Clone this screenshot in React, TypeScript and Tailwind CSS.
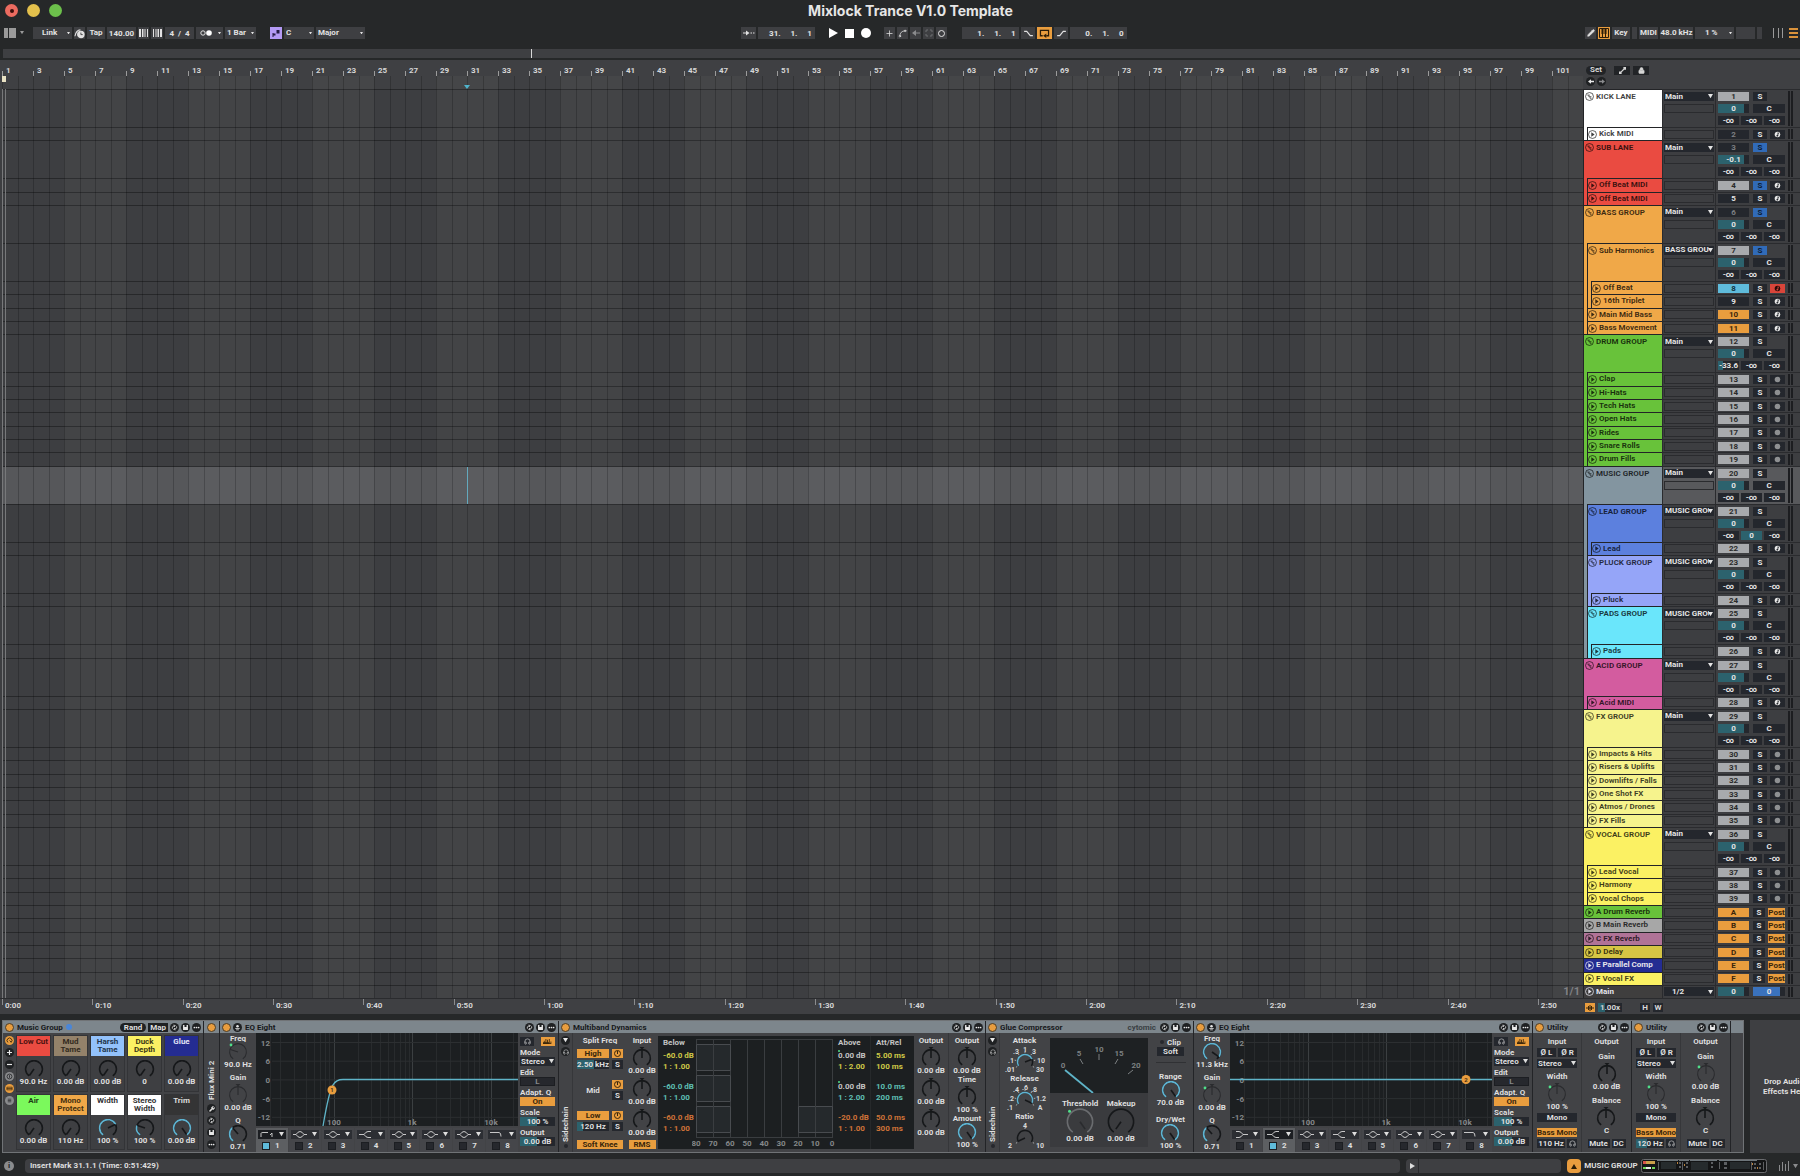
import React from 'react';
import clsx from 'clsx';
import { Headphones, Lock, Maximize, Pencil, Plus, Spline, Wrench } from 'lucide-react';

type Kind = 'group' | 'midi' | 'audio' | 'return' | 'main';

interface Track {
  name: string;
  kind: Kind;
  color: string;
  strips?: string[];
  id: string;
  state?: 'on' | 'off' | 'muted' | 'cue' | 'orange';
  route?: string;
  volume?: string;
  sends?: string[];
  solo?: boolean;
  armed?: boolean;
  selected?: boolean;
  light?: boolean;
}

const WHITE = 'bg-white';
const RED = 'bg-[#ea4b41]';
const ORANGE = 'bg-[#f0a848]';
const GREEN = 'bg-[#68c23a]';
const SLATE = 'bg-[#8395a0]';
const BLUE = 'bg-[#5c80de]';
const PERIWINKLE = 'bg-[#95a5f8]';
const CYAN = 'bg-[#6ae6fb]';
const PINK = 'bg-[#d35c9f]';
const CREAM = 'bg-[#f6f38d]';
const YELLOW = 'bg-[#fbf163]';

const tracks: Track[] = [
  { name: 'KICK LANE', kind: 'group', color: WHITE, id: '1', route: 'Main' },
  { name: 'Kick MIDI', kind: 'midi', color: WHITE, strips: [WHITE], id: '2', state: 'muted' },
  { name: 'SUB LANE', kind: 'group', color: RED, id: '3', state: 'muted', route: 'Main', volume: '-0.1', solo: true },
  { name: 'Off Beat MIDI', kind: 'midi', color: RED, strips: [RED], id: '4', solo: true },
  { name: 'Off Beat MIDI', kind: 'midi', color: RED, strips: [RED], id: '5', state: 'off' },
  { name: 'BASS GROUP', kind: 'group', color: ORANGE, id: '6', state: 'muted', route: 'Main', solo: true },
  { name: 'Sub Harmonics', kind: 'group', color: ORANGE, strips: [ORANGE], id: '7', route: 'BASS GROUP', solo: true },
  { name: 'Off Beat', kind: 'midi', color: ORANGE, strips: [ORANGE, ORANGE], id: '8', state: 'cue', armed: true },
  { name: '16th Triplet', kind: 'midi', color: ORANGE, strips: [ORANGE, ORANGE], id: '9', state: 'off' },
  { name: 'Main Mid Bass', kind: 'midi', color: ORANGE, strips: [ORANGE], id: '10', state: 'orange' },
  { name: 'Bass Movement', kind: 'midi', color: ORANGE, strips: [ORANGE], id: '11', state: 'orange' },
  { name: 'DRUM GROUP', kind: 'group', color: GREEN, id: '12', route: 'Main', sends: ['-33.6', '-∞', '-∞'] },
  { name: 'Clap', kind: 'audio', color: GREEN, strips: [GREEN], id: '13' },
  { name: 'Hi-Hats', kind: 'audio', color: GREEN, strips: [GREEN], id: '14' },
  { name: 'Tech Hats', kind: 'audio', color: GREEN, strips: [GREEN], id: '15' },
  { name: 'Open Hats', kind: 'audio', color: GREEN, strips: [GREEN], id: '16' },
  { name: 'Rides', kind: 'audio', color: GREEN, strips: [GREEN], id: '17' },
  { name: 'Snare Rolls', kind: 'audio', color: GREEN, strips: [GREEN], id: '18' },
  { name: 'Drum Fills', kind: 'audio', color: GREEN, strips: [GREEN], id: '19' },
  { name: 'MUSIC GROUP', kind: 'group', color: SLATE, id: '20', route: 'Main', selected: true },
  { name: 'LEAD GROUP', kind: 'group', color: BLUE, strips: [SLATE], id: '21', route: 'MUSIC GROUP', sends: ['-∞', '0', '-∞'] },
  { name: 'Lead', kind: 'midi', color: BLUE, strips: [SLATE, BLUE], id: '22' },
  { name: 'PLUCK GROUP', kind: 'group', color: PERIWINKLE, strips: [SLATE], id: '23', route: 'MUSIC GROUP' },
  { name: 'Pluck', kind: 'midi', color: PERIWINKLE, strips: [SLATE, PERIWINKLE], id: '24' },
  { name: 'PADS GROUP', kind: 'group', color: CYAN, strips: [SLATE], id: '25', route: 'MUSIC GROUP' },
  { name: 'Pads', kind: 'midi', color: CYAN, strips: [SLATE, CYAN], id: '26' },
  { name: 'ACID GROUP', kind: 'group', color: PINK, id: '27', route: 'Main' },
  { name: 'Acid MIDI', kind: 'midi', color: PINK, strips: [PINK], id: '28' },
  { name: 'FX GROUP', kind: 'group', color: CREAM, id: '29', route: 'Main' },
  { name: 'Impacts & Hits', kind: 'audio', color: CREAM, strips: [CREAM], id: '30' },
  { name: 'Risers & Uplifts', kind: 'audio', color: CREAM, strips: [CREAM], id: '31' },
  { name: 'Downlifts / Falls', kind: 'audio', color: CREAM, strips: [CREAM], id: '32' },
  { name: 'One Shot FX', kind: 'audio', color: CREAM, strips: [CREAM], id: '33' },
  { name: 'Atmos / Drones', kind: 'audio', color: CREAM, strips: [CREAM], id: '34' },
  { name: 'FX Fills', kind: 'audio', color: CREAM, strips: [CREAM], id: '35' },
  { name: 'VOCAL GROUP', kind: 'group', color: YELLOW, id: '36', route: 'Main' },
  { name: 'Lead Vocal', kind: 'audio', color: YELLOW, strips: [YELLOW], id: '37' },
  { name: 'Harmony', kind: 'audio', color: YELLOW, strips: [YELLOW], id: '38' },
  { name: 'Vocal Chops', kind: 'audio', color: YELLOW, strips: [YELLOW], id: '39' },
  { name: 'A Drum Reverb', kind: 'return', color: GREEN, id: 'A', state: 'orange' },
  { name: 'B Main Reverb', kind: 'return', color: 'bg-[#a7a7a7]', id: 'B', state: 'orange' },
  { name: 'C FX Reverb', kind: 'return', color: 'bg-[#b07397]', id: 'C', state: 'orange' },
  { name: 'D Delay', kind: 'return', color: 'bg-[#d5c544]', id: 'D', state: 'orange' },
  { name: 'E Parallel Comp', kind: 'return', color: 'bg-[#242c92]', id: 'E', state: 'orange', light: true },
  { name: 'F Vocal FX', kind: 'return', color: YELLOW, id: 'F', state: 'orange' },
  { name: 'Main', kind: 'main', color: 'bg-[#3f3e3e]', id: 'main', route: '1/2', light: true },
];

const BARS = 102;
const INSERT_BAR = 30;

/* ---------- small shared controls ---------- */

const Caret = ({ className = 'w-[5px]' }: { className?: string }) => (
  <svg viewBox="0 0 6 5" className={clsx('shrink-0 pointer-events-none fill-current', className)}>
    <path d="M0 0h6L3 5z" />
  </svg>
);

interface SelectProps {
  label: string;
  value: string;
  className?: string;
  pad?: string;
  small?: boolean;
  icon?: React.ReactNode;
}

const Select = ({ label, value, className, pad = 'pl-0.5', small, icon }: SelectProps) => (
  <span className={clsx('grid items-center', className)}>
    <select
      aria-label={label}
      defaultValue={value}
      className={clsx('col-start-1 row-start-1 w-full h-full min-w-0 appearance-none bg-transparent pr-[5px] leading-none', pad, icon && 'text-transparent')}
    >
      <option>{value}</option>
    </select>
    {icon}
    <Caret className={clsx('col-start-1 row-start-1 justify-self-end', small ? 'mr-0.5 w-[3px]' : 'mr-px w-[5px]')} />
  </span>
);

interface FieldProps {
  label: string;
  value: string;
  className?: string;
}

const Field = ({ label, value, className }: FieldProps) => (
  <input aria-label={label} defaultValue={value} className={clsx('min-w-0 text-center leading-none', className)} />
);

const TEAL_MOST = 'bg-[linear-gradient(to_right,#2c626d_84%,#24272d_84%)]';

interface KnobProps {
  label: string;
  value: number;
  tick?: boolean;
  blue?: boolean;
  ghost?: boolean;
  dot?: boolean;
  large?: boolean;
}

const polar = (cx: number, cy: number, r: number, deg: number) => {
  const a = ((deg - 90) * Math.PI) / 180;
  return [cx + r * Math.cos(a), cy + r * Math.sin(a)];
};

const arc = (cx: number, cy: number, r: number, from: number, to: number) => {
  const [x1, y1] = polar(cx, cy, r, from);
  const [x2, y2] = polar(cx, cy, r, to);
  return `M${x1} ${y1}A${r} ${r} 0 ${to - from > 180 ? 1 : 0} 1 ${x2} ${y2}`;
};

const Knob = ({ label, value, tick, blue, ghost, dot, large }: KnobProps) => {
  const cy = tick ? 13 : 9;
  const angle = -145 + value * 290;
  const [px, py] = polar(10, cy, large ? 6 : 8, angle);
  const rim = ghost ? '#2a2b2e' : '#16181a';
  const width = ghost || large ? 1.1 : 1.6;
  return (
    <span className="grid justify-items-center shrink-0">
      <svg
        viewBox={tick ? '0 0 20 21' : '0 0 20 17'}
        fill="none"
        className={clsx('col-start-1 row-start-1', large ? 'w-[30px] h-[26px]' : tick ? 'w-5 h-[21px]' : 'w-5 h-[17px]')}
      >
        <path d={arc(10, cy, 8.4, -145, 145)} stroke={large && ghost ? '#6a6c6f' : rim} strokeWidth={width} />
        {blue && <path d={arc(10, cy, 8.4, -145, angle)} stroke="#5fb4d2" strokeWidth={width} />}
        <path d={`M10 ${cy}L${px} ${py}`} stroke={rim} strokeWidth={width} />
        {tick && <path d="M7.5 2h5L10 4.500z" fill={rim} />}
        {dot && <circle cx="3" cy={cy - 7} r={large ? 1 : 1.4} fill="#4fe08a" />}
      </svg>
      <input
        type="range"
        aria-label={label}
        min={0}
        max={1}
        step={0.01}
        defaultValue={value}
        className="col-start-1 row-start-1 w-5 h-full opacity-0"
      />
    </span>
  );
};

interface DialProps extends KnobProps {
  text: string;
  hideLabel?: boolean;
}

const Dial = ({ text, hideLabel, ...knob }: DialProps) => (
  <div className="flex flex-col items-center">
    {!hideLabel && <span className="h-[9px] whitespace-nowrap">{knob.label}</span>}
    <Knob {...knob} />
    <span className="h-[9px] whitespace-nowrap">{text}</span>
  </div>
);

const Round = ({ label, children }: { label: string; children: React.ReactNode }) => (
  <button aria-label={label} className="size-[9px] shrink-0 rounded-full bg-[#1f2123] text-[#e8e8e8] flex items-center justify-center">
    {children}
  </button>
);

const SwapIcon = () => (
  <svg viewBox="0 0 10 10" className="size-[7px]" fill="none" stroke="currentColor" strokeWidth="1.300">
    <path d="M2 6.500C1.500 4 3 2.500 5.500 2.500M8 3.500C8.500 6 7 7.500 4.500 7.500M4.500 1l1.500 1.500L4.500 4M5.500 6L4 7.500 5.500 9" />
  </svg>
);

const SaveIcon = () => (
  <svg viewBox="0 0 10 10" className="size-[7px]" fill="currentColor">
    <path fillRule="evenodd" d="M1.500 1.500h7v7h-7zM3.500 1.500v2.800h3V1.500z" />
  </svg>
);

const MoreIcon = () => (
  <svg viewBox="0 0 10 10" className="size-[7px]" fill="currentColor">
    <circle cx="2" cy="5" r="1.200" />
    <circle cx="5" cy="5" r="1.200" />
    <circle cx="8" cy="5" r="1.200" />
  </svg>
);

const PersonIcon = () => (
  <svg viewBox="0 0 10 10" className="size-[7px]" fill="currentColor">
    <circle cx="5" cy="3.200" r="1.800" />
    <path d="M1.800 6h6.400v1H1.800zM3 8h4v1H3z" />
  </svg>
);

/* ---------- top bars ---------- */

const Chip = ({ label, className, children }: { label?: string; className?: string; children?: React.ReactNode }) => (
  <button aria-label={label} className={clsx('h-3 flex items-center justify-center whitespace-nowrap', className)}>
    {children}
  </button>
);

const TitleBar = () => (
  <header className="h-[21px] grid grid-cols-[1fr_auto_1fr] items-center pl-[5px]">
    <div className="flex gap-[9px]">
      <button aria-label="Close" className="size-[13px] rounded-full bg-[#ec6b60] flex items-center justify-center">
        <span className="size-1 rounded-full bg-[#3c0d0a]" />
      </button>
      <button aria-label="Minimize" className="size-[13px] rounded-full bg-[#e3c04c]" />
      <button aria-label="Zoom" className="size-[13px] rounded-full bg-[#6cc04b]" />
    </div>
    <h1 className="pl-4 font-['Inter',sans-serif] text-[14px] leading-5 font-bold text-[#e6e6e6]">Mixlock Trance V1.0 Template</h1>
    <span />
  </header>
);

const Transport = () => (
  <nav className="h-6 grid grid-cols-[1fr_auto_1fr] items-center pl-1 pr-0.5 text-[#e2e2e2]">
    <div className="flex items-center gap-0.5">
      <button aria-label="View" className="flex items-center gap-1 w-[27px] text-[#9a9a9a]">
        <svg viewBox="0 0 12 10" className="w-3 h-[10px] fill-current">
          <path d="M0 0h4v10H0zM5 0h7v10H5z" />
        </svg>
        <Caret className="w-1" />
      </button>
      <Select small label="Link" value="Link" pad="pl-[9px]" className="w-[39px] h-3 bg-[#3e3f42]" />
      <Chip label="Metronome" className="w-[11px] bg-[#3e3f42]">
        <svg viewBox="0 0 12 12" className="size-[11px]" fill="none" stroke="currentColor" strokeWidth="1.200">
          <circle cx="7.500" cy="7" r="3.500" fill="currentColor" />
          <path d="M1 9c1-5 3-7 6-7" />
          <path d="M7.500 5v2.200h2" stroke="#3e3f42" strokeWidth="1" />
        </svg>
      </Chip>
      <Chip className="w-[18px] bg-[#3e3f42]">Tap</Chip>
      <Field label="Tempo" value="140.00" className="w-[29px] h-3 bg-[#3e3f42]" />
      <Chip label="Nudge down" className="w-[11px] bg-[#3e3f42]">
        <svg viewBox="0 0 9 8" className="w-[9px] h-2 fill-current">
          <path d="M0 0h2v8H0zM3 0h1.500v8H3zM5.500 0h1v8h-1zM8 0h1v8H8z" />
        </svg>
      </Chip>
      <Chip label="Nudge up" className="w-3 bg-[#3e3f42]">
        <svg viewBox="0 0 9 8" className="w-[9px] h-2 fill-current">
          <path d="M0 0h1v8H0zM2.500 0h1v8h-1zM4.500 0H6v8H4.500zM7 0h2v8H7z" />
        </svg>
      </Chip>
      <Field label="Time signature" value="4  /  4" className="w-[29px] h-3 bg-[#3e3f42]" />
      <Select
        small
        label="Metronome mode"
        value="○●"
        className="w-[27px] h-3 bg-[#3e3f42]"
        icon={
          <svg viewBox="0 0 12 6" className="col-start-1 row-start-1 ml-1 w-3 h-1.5 pointer-events-none">
            <circle cx="3" cy="3" r="2.200" fill="none" stroke="#e2e2e2" />
            <circle cx="9" cy="3" r="2.800" fill="#fff" />
          </svg>
        }
      />
      <Select small label="Quantization" value="1 Bar" className="w-[31px] h-3 bg-[#3e3f42]" />
      <Chip label="Scale mode" className="ml-3 w-3 bg-[#b49af5] text-[#251a45]">
        <svg viewBox="0 0 12 12" className="size-3">
          <path d="M2.500 6h1v4h-1zM3.500 6.500h2v2h-2zM6.500 3h3v3.500h-3z" fill="currentColor" />
        </svg>
      </Chip>
      <Select small label="Root note" value="C" className="w-[30px] h-3 bg-[#3e3f42]" />
      <Select small label="Scale name" value="Major" className="w-[49px] h-3 bg-[#3e3f42]" />
    </div>

    <div className="flex items-center gap-0.5 pl-[66px]">
      <Chip label="Follow" className="w-[15px] bg-[#3e3f42]">
        <svg viewBox="0 0 12 6" className="w-3 h-1.5 fill-current">
          <path d="M0 2.500h3V.5L6.500 3 3 5.500v-2H0zM7.500 2.500H9v1H7.500zM10 2.500h1.500v1H10z" />
        </svg>
      </Chip>
      <Field label="Position" value="31.     1.     1" className="pl-2 w-[57px] h-3 bg-[#3e3f42]" />
      <button aria-label="Play" className="ml-3 w-[9px]">
        <svg viewBox="0 0 9 10" className="w-[9px] h-[10px] fill-white">
          <path d="M0 0l9 5-9 5z" />
        </svg>
      </button>
      <button aria-label="Stop" className="ml-[5px] size-[9px] bg-white" />
      <button aria-label="Record" className="ml-[5px] size-[10px] rounded-full bg-white" />
      <Chip label="Overdub" className="ml-[11px] w-[11px] bg-[#3e3f42]">
        <Plus size={9} />
      </Chip>
      <Chip label="Automation arm" className="w-[11px] bg-[#3e3f42]">
        <Spline size={9} />
      </Chip>
      <Chip label="Re-enable automation" className="w-[11px] bg-[#3e3f42] text-[#8a8b8d]">
        <svg viewBox="0 0 8 6" className="w-2 h-1.5 fill-current">
          <path d="M4 0v6L0 3zM4 2.500h4v1H4z" />
        </svg>
      </Chip>
      <Chip label="Capture" className="w-[11px] bg-[#3e3f42] text-[#8a8b8d]">
        <Maximize size={8} />
      </Chip>
      <Chip label="Session record" className="w-[11px] bg-[#3e3f42]">
        <span className="size-[7px] rounded-full border border-current" />
      </Chip>
      <Field label="Loop start" value="1.     1.     1" className="ml-[13px] pl-3 w-[57px] h-3 bg-[#3e3f42]" />
      <Chip label="Punch in" className="w-[14px] bg-[#3e3f42]">
        <svg viewBox="0 0 12 8" className="w-[11px] h-[7px]" fill="none" stroke="currentColor" strokeWidth="1.300">
          <path d="M1 1.500h3l4 5h3" />
        </svg>
      </Chip>
      <Chip label="Loop" className="w-[15px] bg-[#e99d3e] text-[#2b1c08]">
        <svg viewBox="0 0 12 10" className="w-[11px] h-[9px]" fill="none" stroke="currentColor" strokeWidth="1.400">
          <path d="M4 7.500H1.500v-6h9v6H8" />
          <path d="M4.500 7.500L8 5v5z" fill="currentColor" stroke="none" />
        </svg>
      </Chip>
      <Chip label="Punch out" className="w-[14px] bg-[#3e3f42]">
        <svg viewBox="0 0 12 8" className="w-[11px] h-[7px]" fill="none" stroke="currentColor" strokeWidth="1.300">
          <path d="M1 6.500h3l4-5h3" />
        </svg>
      </Chip>
      <Field label="Loop length" value="0.     1.     0" className="pl-3 w-[57px] h-3 bg-[#3e3f42]" />
    </div>

    <div className="flex items-center justify-end gap-0.5">
      <Chip label="Draw mode" className="w-[11px] bg-[#3e3f42]">
        <Pencil size={8} className="fill-current" />
      </Chip>
      <Chip label="Computer keyboard" className="w-3 bg-[#e99d3e] text-[#2b1c08]">
        <svg viewBox="0 0 10 10" className="size-[10px]" fill="none" stroke="currentColor">
          <path d="M.5.5h9v9h-9zM3.500 5v4.500M6.500 5v4.500" />
          <path d="M3.500.5V6M6.500.5V6" strokeWidth="2" />
        </svg>
      </Chip>
      <Chip className="w-[18px] bg-[#3e3f42]">Key</Chip>
      <Chip label="Key activity" className="w-[5px] bg-[#3e3f42]" />
      <Chip className="w-[19px] bg-[#3e3f42]">MIDI</Chip>
      <Chip className="w-[33px] bg-[#3e3f42]">48.0 kHz</Chip>
      <Select small label="CPU load" value="1 %" pad="pl-[10px]" className="w-[39px] h-3 bg-[#3e3f42]" />
      <Chip label="Overload" className="w-[19px] bg-[#3e3f42]" />
      <Chip label="MIDI activity" className="w-[5px] bg-[#3e3f42]" />
      <button aria-label="Session view" className="ml-[9px] flex justify-between w-[10px] h-[10px]">
        <span className="w-px bg-[#9a9a9a]" />
        <span className="w-px bg-[#9a9a9a]" />
        <span className="w-px bg-[#9a9a9a]" />
      </button>
      <button aria-label="Arrangement view" className="ml-1 flex flex-col justify-between w-[9px] h-[10px]">
        <span className="h-0.5 w-full bg-[#d9923b]" />
        <span className="h-0.5 w-full bg-[#d9923b]" />
        <span className="h-0.5 w-full bg-[#d9923b]" />
      </button>
    </div>
  </nav>
);

/* ---------- arrangement ---------- */

const BarColumns = () => (
  <div className="flex h-full w-full">
    {Array.from({ length: BARS }, (_, i) => (
      <div key={i} className={clsx('flex-1 border-l border-black/20', Math.floor(i / 4) % 2 === 1 && 'bg-white/[0.03]')} />
    ))}
  </div>
);

const BeatRuler = () => (
  <div className="h-[29px] flex bg-[#3f4043] pl-0.5 text-[#d6d6d6]">
    <div className="flex-1 min-w-0 flex flex-col">
      <div className="h-4 flex items-end">
        {Array.from({ length: BARS / 2 }, (_, i) => (
          <div key={i} className="flex-1 w-0 flex items-end whitespace-nowrap">
            <span className="w-px h-[5px] bg-[#9b9b9b]" />
            <span className="pl-[3px] h-[10px] leading-[10px]">{i * 2 + 1}</span>
          </div>
        ))}
      </div>
      <div className="relative flex-1">
        <BarColumns />
        <span className="absolute left-0 top-0 w-1 h-1.5 bg-[#e9e2c4]" />
        <svg viewBox="0 0 6 4" className="absolute bottom-0 w-1.5 h-1 -translate-x-1/2 fill-[#4fb4cc]" style={{ left: `${(INSERT_BAR / BARS) * 100}%` }}>
          <path d="M0 0h6L3 4z" />
        </svg>
      </div>
    </div>
    <div className="w-[217px] shrink-0 pl-[3px] pt-[5px] flex flex-col gap-0.5">
      <div className="flex items-center h-[10px]">
        <button className="w-5 h-[9px] rounded-full bg-[#222427] leading-none">Set</button>
        <button aria-label="Automation mode" className="ml-2 w-4 h-[9px] bg-[#222427] flex items-center justify-center">
          <svg viewBox="0 0 8 8" className="size-[7px]" fill="currentColor">
            <path d="M5 0h3v3H5zM0 5h3v3H0zM2 5l3-3 1 1-3 3z" />
          </svg>
        </button>
        <button aria-label="Lock envelopes" className="ml-[3px] w-4 h-[9px] bg-[#222427] flex items-center justify-center">
          <Lock size={7} className="fill-current" />
        </button>
      </div>
      <div className="flex gap-0.5">
        <Round label="Previous locator">
          <svg viewBox="0 0 8 6" className="w-1.5 h-[5px] fill-current"><path d="M4 0v6L0 3zM4 2h4v2H4z" /></svg>
        </Round>
        <Round label="Next locator">
          <svg viewBox="0 0 8 6" className="w-1.5 h-[5px] fill-[#8a8b8d]"><path d="M4 0v6l4-3zM4 2H0v2h4z" /></svg>
        </Round>
      </div>
    </div>
  </div>
);

const FoldIcon = ({ open }: { open: boolean }) => (
  <svg viewBox="0 0 10 10" className="size-[9px]" fill="none" stroke="currentColor">
    <circle cx="5" cy="5" r="4.400" strokeWidth="0.900" />
    {open ? (
      <path d="M2.400 3.400h3M4.200 5.200h3M5.600 7h1.800M4.200 3.400v1.800M5.600 5.200V7" strokeWidth="0.800" />
    ) : (
      <path d="M3.700 2.600l3.700 2.400-3.700 2.400z" fill="currentColor" stroke="none" />
    )}
  </svg>
);

const NameCell = ({ track }: { track: Track }) => (
  <div className="w-[79px] shrink-0 flex border-l border-[#232427]">
    {track.strips?.map((strip, i) => (
      <span key={i} className={clsx('w-[3px] box-content shrink-0 border-r border-[#232427]', strip)} />
    ))}
    <div
      className={clsx(
        'flex-1 min-w-0 flex gap-0.5 border-t border-[#232427] overflow-hidden whitespace-nowrap',
        track.kind === 'group' ? 'items-start pt-0.5' : 'items-center',
        !track.strips && 'pl-px',
        track.light ? 'text-[#e4e4ec]' : 'text-black/75',
        track.color,
      )}
    >
      <button aria-label={`Unfold ${track.name}`} className="shrink-0">
        <FoldIcon open={track.kind === 'group'} />
      </button>
      <span className="h-[10px] leading-[10px]">{track.name}</span>
    </div>
  </div>
);

const RouteCell = ({ track }: { track: Track }) => (
  <div
    className={clsx(
      'w-[53px] shrink-0 flex flex-col gap-[3px] px-px border-l border-t border-[#2a2b2e]',
      track.kind === 'group' ? 'pt-0.5' : 'justify-center',
      track.selected && 'bg-[#58595c]',
    )}
  >
    {track.route && (
      <Select
        label={`${track.name} output`}
        value={track.route}
        pad={track.kind === 'main' ? 'pl-2' : 'pl-px'}
        className="h-[9px] bg-[#24272d] text-[#e4e4e4] overflow-hidden"
      />
    )}
    {track.kind !== 'main' && <span className="h-[9px] border border-[#2a2b2e]" />}
  </div>
);

const stateClass = {
  on: 'bg-[#a8aaad] text-[#2a2a2a]',
  off: 'bg-[#24272d] text-[#e4e4e4]',
  muted: 'bg-[#24272d] text-[#7d7f83]',
  cue: 'bg-[#5fbbdb] text-[#10343f]',
  orange: 'bg-[#e99d3e] text-[#3a260a]',
};

const ArmButton = ({ track }: { track: Track }) => (
  <button
    aria-label={`Arm ${track.name}`}
    className={clsx('ml-[3px] w-[15px] h-[9px] flex items-center justify-center', track.armed ? 'bg-[#d9453a] text-[#2a0a08]' : 'bg-[#24272d] text-[#e8e8e8]')}
  >
    <svg viewBox="0 0 8 8" className="size-[7px]">
      <circle cx="4" cy="4" r="3.200" className={track.kind === 'audio' ? 'fill-[#8e9092]' : 'fill-current'} />
      {track.kind === 'midi' && <path d="M4.500 1.800v3.400M4.500 2l1.200 1" stroke={track.armed ? '#d9453a' : '#24272d'} strokeWidth="0.900" />}
      {track.kind === 'midi' && <circle cx="3.800" cy="5.300" r="1" fill={track.armed ? '#d9453a' : '#24272d'} />}
    </svg>
  </button>
);

const MixerCell = ({ track }: { track: Track }) => {
  const group = track.kind === 'group';
  const sends = track.sends ?? ['-∞', '-∞', '-∞'];
  return (
    <div className={clsx('w-[85px] shrink-0 flex gap-[3px] pl-0.5 border-l border-t border-[#2a2b2e] text-[#e4e4e4]', track.selected && 'bg-[#58595c]')}>
      <div className={clsx('w-[67px] flex flex-col gap-[3px]', group ? 'pt-0.5' : 'justify-center')}>
        {track.kind === 'main' ? (
          <div className="flex gap-1">
            <Field label="Main volume" value="0" className={clsx('w-[31px] h-[9px]', TEAL_MOST)} />
            <Field label="Cue volume" value="0" className="w-8 h-[9px] bg-[linear-gradient(to_right,#3a72bd_84%,#24272d_84%)]" />
          </div>
        ) : (
          <div className="flex">
            <button className={clsx('w-[31px] h-[9px] leading-[9px]', stateClass[track.state ?? 'on'])}>{track.id}</button>
            <button
              aria-label={`Solo ${track.name}`}
              className={clsx('ml-1 h-[9px] leading-[9px]', track.kind === 'return' ? 'w-3' : 'w-[14px]', track.solo ? 'bg-[#316bb8] text-[#0d1e36]' : 'bg-[#24272d]')}
            >
              S
            </button>
            {(track.kind === 'midi' || track.kind === 'audio') && <ArmButton track={track} />}
            {track.kind === 'return' && <button className="ml-[3px] w-[17px] h-[9px] leading-[9px] bg-[#e99d3e] text-[#3a260a]">Post</button>}
          </div>
        )}
        {group && (
          <>
            <div className="flex gap-1">
              <Field label={`${track.name} volume`} value={track.volume ?? '0'} className={clsx('w-[31px] h-[9px]', TEAL_MOST)} />
              <Field label={`${track.name} pan`} value="C" className="w-8 h-[9px] bg-[#24272d]" />
            </div>
            <div className="flex gap-0.5">
              {sends.map((send, i) => (
                <Field
                  key={i}
                  label={`${track.name} send ${'ABC'[i]}`}
                  value={send}
                  className={clsx('w-[21px] h-[9px]', send === '0' ? 'bg-[#2c626d]' : send === '-∞' ? 'bg-[#24272d]' : 'bg-[linear-gradient(to_right,#2c626d_24%,#24272d_24%)]')}
                />
              ))}
            </div>
          </>
        )}
      </div>
      <div className="flex gap-px py-px">
        <span className="w-0.5 bg-[#1c1d20]" />
        <span className="w-0.5 bg-[#1c1d20]" />
      </div>
    </div>
  );
};

const TrackRow = ({ track }: { track: Track }) => (
  <div className={clsx('flex', track.kind === 'group' ? 'shrink-0 basis-[38px]' : 'grow shrink-0 basis-[13px]')}>
    <div className={clsx('relative flex-1 min-w-0 border-t border-[#27282a] flex items-center justify-end', track.selected && 'bg-[#56575a]')}>
      {track.selected && <span className="absolute z-20 inset-y-0 w-px bg-[#63a9bd]" style={{ left: `${(INSERT_BAR / BARS) * 100}%` }} />}
      {track.kind === 'main' && <span className="pr-[3px] text-[11px] leading-3 text-[#7c7d80]">1/1</span>}
    </div>
    <NameCell track={track} />
    <RouteCell track={track} />
    <MixerCell track={track} />
  </div>
);

const Arrangement = () => (
  <main className="grow grid grid-cols-1 pl-0.5 bg-[#3d3e41]">
    <div className="col-start-1 row-start-1 flex flex-col">
      {tracks.map((track) => (
        <TrackRow key={track.id} track={track} />
      ))}
    </div>
    <div className="relative z-10 col-start-1 row-start-1 mr-[217px] grid pointer-events-none">
      <div className="col-start-1 row-start-1">
        <BarColumns />
      </div>
      <span className="col-start-1 row-start-1 w-1 border-x border-[#77787a]" />
    </div>
  </main>
);

const times = Array.from({ length: 18 }, (_, i) => `${Math.floor(i / 6)}:${String((i % 6) * 10).padStart(2, '0')}`);

const TimeRuler = () => (
  <div className="h-4 flex bg-[#3f4043] border-t border-[#2a2b2e] pl-0.5 text-[#d6d6d6]">
    <div className="flex-1 min-w-0 flex">
      {times.map((time, i) => (
        <div key={time} className={clsx('w-0 flex whitespace-nowrap', i === 17 ? 'flex-1' : 'flex-2')}>
          <span className="w-px h-1.5 bg-[#8b8c8e]" />
          <span className="pl-0.5 pt-0.5">{time}</span>
        </div>
      ))}
    </div>
    <div className="w-[217px] shrink-0 flex items-start pt-1 pl-0.5">
      <button aria-label="Optimize height" className="w-[10px] h-[9px] bg-[#e99d3e] flex items-center justify-center">
        <svg viewBox="0 0 8 6" className="w-2 h-1.5 fill-[#3a260a]"><path d="M0 2.500h8v1H0zM2 1h1v4H2zM3.500 0h1v6h-1zM5 1h1v4H5z" /></svg>
      </button>
      <Field label="Zoom" value="1.00x" className="ml-[3px] w-6 h-[9px] bg-[linear-gradient(to_right,#2c626d_30%,#24272d_30%)]" />
      <button className="ml-[18px] w-[10px] h-[9px] leading-[9px] bg-[#24272d]">H</button>
      <button className="ml-[3px] w-[10px] h-[9px] leading-[9px] bg-[#24272d]">W</button>
    </div>
  </div>
);

/* ---------- devices ---------- */

interface DeviceProps {
  title: string;
  width: string;
  person?: boolean;
  brand?: string;
  badge?: React.ReactNode;
  extra?: React.ReactNode;
  children: React.ReactNode;
}

const Power = ({ label }: { label: string }) => <button aria-label={`${label} on`} className="size-[9px] shrink-0 rounded-full bg-[#e99d3e] border border-[#4a3c28]" />;

const Device = ({ title, width, person, brand, badge, extra, children }: DeviceProps) => (
  <section className={clsx('shrink-0 flex flex-col border-r border-[#232427]', width)}>
    <div className="h-3 flex items-center gap-0.5 px-0.5 bg-[#7d868c]">
      <Power label={title} />
      {person && <Round label="MIDI input"><PersonIcon /></Round>}
      <h2 className="pl-px text-[#17191b] whitespace-nowrap">{title}</h2>
      {badge}
      <span className="flex-1" />
      {brand && <span className="text-[#3a3f43] pr-0.5">{brand}</span>}
      {extra}
      <Round label="Hot-swap preset"><SwapIcon /></Round>
      <Round label="Save preset"><SaveIcon /></Round>
      <Round label="More options"><MoreIcon /></Round>
    </div>
    <div className="flex-1 flex bg-[#424346]">{children}</div>
  </section>
);

const macros = [
  { name: 'Low Cut', value: '90.0 Hz', color: 'bg-[#ea4b41] text-[#4a1210]', pos: 0 },
  { name: 'Mud Tame', value: '0.00 dB', color: 'bg-[#94826a] text-[#332b20]', pos: 0 },
  { name: 'Harsh Tame', value: '0.00 dB', color: 'bg-[#93c2fb] text-[#22354c]', pos: 0 },
  { name: 'Duck Depth', value: '0', color: 'bg-[#fbf163] text-[#3d3a14]', pos: 0 },
  { name: 'Glue', value: '0.00 dB', color: 'bg-[#242c92] text-[#e0e2f5]', pos: 0 },
  { name: 'Air', value: '0.00 dB', color: 'bg-[#7bf95c] text-[#1f3f16]', pos: 0 },
  { name: 'Mono Protect', value: '110 Hz', color: 'bg-[#f0a848] text-[#46300f]', pos: 0 },
  { name: 'Width', value: '100 %', color: 'bg-white text-[#333]', pos: 0.72, blue: true },
  { name: 'Stereo Width', value: '100 %', color: 'bg-white text-[#333]', pos: 0.25, blue: true },
  { name: 'Trim', value: '0.00 dB', color: 'bg-[#343435] text-[#dcdcdc]', pos: 1, blue: true },
];

const RackIcon = ({ label, active, children }: { label: string; active?: boolean; children: React.ReactNode }) => (
  <button
    aria-label={label}
    className={clsx('size-[9px] rounded-full flex items-center justify-center leading-none', active ? 'bg-[#e99d3e] text-[#3a260a]' : 'bg-[#8a8b8d] text-[#2a2b2e]')}
  >
    {children}
  </button>
);

const MacroRack = () => (
  <Device
    title="Music Group"
    width="w-[201px]"
    badge={<span className="ml-px size-1.5 rounded-full bg-[#4a86d8]" />}
    extra={
      <>
        <button className="px-1 h-[9px] leading-[9px] rounded-full bg-[#1f2123]">Rand</button>
        <button className="px-0.5 h-[9px] leading-[9px] bg-[#1f2123]">Map</button>
      </>
    }
  >
    <div className="w-[13px] flex flex-col items-center gap-[3px] pt-[3px]">
      <RackIcon label="Macro controls" active>
        <svg viewBox="0 0 8 8" className="size-[7px]" fill="none" stroke="currentColor"><path d={arc(4, 4, 2.8, -140, 140)} /><path d="M4 4l2 2" /></svg>
      </RackIcon>
      <Round label="Add macro"><svg viewBox="0 0 6 6" className="size-[5px] fill-current"><path d="M0 2.300h6v1.400H0zM2.300 0h1.400v6H2.300z" /></svg></Round>
      <Round label="Remove macro"><svg viewBox="0 0 6 6" className="size-[5px] fill-current"><path d="M0 2.300h6v1.400H0z" /></svg></Round>
      <RackIcon label="Variations">
        <svg viewBox="0 0 8 8" className="size-[7px]" fill="none" stroke="currentColor"><circle cx="4" cy="4" r="2.800" /><path d="M4 2.500v3" /></svg>
      </RackIcon>
      <RackIcon label="Devices" active>
        <svg viewBox="0 0 8 8" className="size-[7px]" fill="none" stroke="currentColor"><path d="M1 2.500h6v3H1zM1 4h6" strokeWidth="0.800" /></svg>
      </RackIcon>
      <RackIcon label="Chains">
        <svg viewBox="0 0 8 8" className="size-[7px]" stroke="currentColor" strokeWidth="0.800"><path d="M2 2.500h4M2 4h4M2 5.500h4" /></svg>
      </RackIcon>
    </div>
    <div className="flex-1 grid grid-cols-5 grid-rows-2 gap-0.5 pt-0.5 pb-0.5 pr-1">
      {macros.map((macro) => (
        <div key={macro.name} className="flex flex-col border border-[#333437] bg-[#3e3f42]">
          <span className={clsx('h-5 pt-0.5 text-center leading-2', macro.color)}>{macro.name}</span>
          <div className="flex flex-col items-center pt-1">
            <Knob label={macro.name} value={macro.pos} blue={macro.blue} />
            <span className="h-[9px] whitespace-nowrap">{macro.value}</span>
          </div>
        </div>
      ))}
    </div>
  </Device>
);

const FoldedDevice = () => (
  <section className="w-4 shrink-0 flex flex-col items-center border-r border-[#232427] bg-[#424346]">
    <div className="h-3 w-full flex items-center justify-center bg-[#7d868c]"><Power label="Flux Mini 2" /></div>
    <h2 className="flex-1 [writing-mode:vertical-rl] rotate-180 pt-1 leading-[10px]">Flux Mini 2</h2>
    <div className="flex flex-col gap-[3px] pb-[3px]">
      <Round label="Show plug-in window"><Wrench size={6} className="fill-current" /></Round>
      <Round label="Hot-swap preset"><SwapIcon /></Round>
      <Round label="Save preset"><SaveIcon /></Round>
      <Round label="More options"><MoreIcon /></Round>
    </div>
  </section>
);

const filterShapes: Record<string, string> = {
  cut: 'M1 7V3.500q0-1 2-1h5M10 5l2-2v4',
  bell: 'M0 4.500h3M11 4.500H14M3 4.500Q7-1.500 11 4.500Q7 10.500 3 4.500',
  high: 'M0 4.500h5M12 1.500H9Q7 1.500 5 4.500Q7 7.500 9 7.500h3',
  low: 'M2 1.500h3Q7 1.500 9 4.500Q7 7.500 5 7.500H2M9 4.500h5',
  lp: 'M0 2.500h9q2 0 2 4',
};

interface EqProps {
  freq: string;
  freqPos: number;
  first: boolean;
  shapes: string[];
  active: number;
}

const freqLines = [14, 24, 38, 50, 58, 64, 69, 73, 78, 102, 115, 124, 132, 138, 144, 149, 153, 156, 180, 194, 204, 212, 218, 223, 228, 232, 235, 257];

const EqGraph = ({ first }: { first: boolean }) => (
  <svg viewBox="0 0 262 93" className="w-[262px] h-[93px] bg-[#1c1f21]" fill="none">
    {freqLines.map((x) => (
      <path key={x} d={`M${x}.5 0v93`} stroke={x === 78 || x === 156 || x === 235 ? '#3b3f41' : '#282b2d'} />
    ))}
    {[12, 6, 0, -6, -12].map((db, i) => (
      <g key={db}>
        <path d={`M16 ${9.5 + i * 18.7}H262`} stroke="#2c2f31" />
        <text x="14" y={12.5 + i * 18.7} textAnchor="end" className="fill-[#85888a]">{db}</text>
      </g>
    ))}
    <text x="78" y="92" textAnchor="middle" className="fill-[#85888a]">100</text>
    <text x="156" y="92" textAnchor="middle" className="fill-[#85888a]">1k</text>
    <text x="235" y="92" textAnchor="middle" className="fill-[#85888a]">10k</text>
    <path d={first ? 'M67 93C71 70 74 56 77 52Q80 46.500 87 46.500H262' : 'M0 46.500H262'} stroke="#5fb4c8" strokeWidth="1.300" />
    <circle cx={first ? 76 : 236} cy={first ? 57 : 46.5} r="4.500" fill="#e99d3e" />
    <text x={first ? 76 : 236} y={first ? 59 : 49} textAnchor="middle" className="fill-[#4a3010] text-[6px]">{first ? 1 : 2}</text>
  </svg>
);

const EqEight = ({ freq, freqPos, first, shapes, active }: EqProps) => (
  <Device title="EQ Eight" width="w-[339px]" person>
    <div className="w-9 shrink-0 flex flex-col items-center gap-1 pt-px">
      <Dial label="Freq" text={freq} value={freqPos} blue={!first} ghost={first} dot={first} />
      <Dial label="Gain" text="0.00 dB" value={0.5} tick ghost dot={!first} />
      <Dial label="Q" text="0.71" value={0.36} blue />
    </div>
    <div className="flex flex-col">
      <EqGraph first={first} />
      <div className="flex-1 grid grid-cols-8 gap-px pt-0.5">
        {shapes.map((shape, i) => (
          <div key={i} className={clsx('flex flex-col gap-0.5 px-0.5 pt-0.5', i === active ? 'bg-[#5d5f62]' : 'bg-[#45464a]')}>
            <button aria-label={`Filter ${i + 1} type`} className={clsx('h-[9px] flex items-center justify-between px-0.5', i === active ? 'bg-[#1c1e22]' : 'bg-[#2c2e33]')}>
              <svg viewBox="0 0 14 9" className="w-[14px] h-[9px]" fill="none" stroke="#d8d8d8" strokeWidth="0.900"><path d={filterShapes[shape]} /></svg>
              <Caret className="w-[5px]" />
            </button>
            <label className="flex items-center gap-[5px] pl-1 h-[9px]">
              <input type="checkbox" defaultChecked={i === active} className="size-2 appearance-none border border-[#1c1e22] bg-[#26282d] checked:bg-[#5fbbdb]" />
              {i + 1}
            </label>
          </div>
        ))}
      </div>
    </div>
    <div className="flex-1 flex flex-col gap-0.5 pl-0.5 pr-[3px] pt-1">
      <div className="flex justify-between">
        <button aria-label="Audition" className="w-[14px] h-[9px] bg-[#24272d] flex items-center justify-center"><Headphones size={7} /></button>
        <button aria-label="Analyze" className="w-[14px] h-[9px] bg-[#e99d3e] flex items-center justify-center">
          <svg viewBox="0 0 12 6" className="w-[10px] h-[5px] fill-[#3a260a]"><path d="M0 6V4h1V2h1v2h1V0h1v4h1V1h1v3h1V0h1v5h1V3h1v3z" /></svg>
        </button>
      </div>
      <div>Mode<Select label="Mode" value="Stereo" pad="pl-px" className="h-[9px] bg-[#24272d]" /></div>
      <div>Edit<button className="block w-full h-[9px] bg-[#26282d] border border-[#1c1e22] text-[#85888a] leading-[7px]">L</button></div>
      <div className="whitespace-nowrap">Adapt. Q<button className="block w-full h-[9px] bg-[#e99d3e] text-[#3a260a]">On</button></div>
      <div>Scale<Field label="Scale" value="100 %" className="block w-full h-[9px] bg-[linear-gradient(to_right,#2c626d_50%,#24272d_50%)]" /></div>
      <div>Output<Field label="Output" value="0.00 dB" className="block w-full h-[9px] bg-[linear-gradient(to_right,#2c626d_50%,#24272d_50%)]" /></div>
    </div>
  </Device>
);

const SideStrip = () => (
  <div className="w-[14px] shrink-0 flex flex-col items-center gap-0.5 pt-[3px] pb-1 border-r border-[#36373a]">
    <Round label="Collapse"><Caret className="w-[5px]" /></Round>
    <Round label="Sidechain listen"><Headphones size={6} /></Round>
    <span className="flex-1 [writing-mode:vertical-rl] rotate-180 leading-[10px]">Sidechain</span>
    <span className="size-1 rounded-full bg-[#26282d]" />
  </div>
);

const BandPower = ({ label }: { label: string }) => (
  <button aria-label={`${label} active`} className="w-[11px] h-[9px] bg-[#e99d3e] flex items-center justify-center">
    <span className="size-[7px] rounded-full border border-[#3a260a] flex justify-center"><span className="w-px h-[3px] bg-[#3a260a]" /></span>
  </button>
);

const bands = [
  { color: 'text-[#cfc947]', above: '0.00 dB', automated: true, ratio: '1 : 2.00', att: '5.00 ms', rel: '100 ms' },
  { color: 'text-[#5fbfb4]', above: '0.00 dB', automated: true, ratio: '1 : 2.00', att: '10.0 ms', rel: '200 ms' },
  { color: 'text-[#cf7338]', above: '-20.0 dB', ratio: '1 : 1.00', att: '50.0 ms', rel: '300 ms' },
];

const BandGraph = () => (
  <svg viewBox="0 0 144 112" className="w-[144px] h-28" fill="none">
    {Array.from({ length: 9 }, (_, i) => (
      <g key={i}>
        <path d={`M${4.5 + i * 17} 3v98`} stroke="#3a3d40" />
        <text x={4 + i * 17} y="110" textAnchor="middle" className="fill-[#85888a]">{80 - i * 10}</text>
      </g>
    ))}
    <path d="M4 3.500h137M4 101.500h137" stroke="#3a3d40" />
    {[8.5, 39.5, 70.5].map((y) => (
      <path key={y} d={`M4.500 ${y}h34v26h-34z`} fill="#25292c" stroke="#484b4f" />
    ))}
    <path d="M21.500 8v93" stroke="#3a3d40" />
    <path d="M106.500 70.500h34v26h-34z" fill="#25292c" stroke="#484b4f" />
    <path d="M123.500 70v26" stroke="#3a3d40" />
  </svg>
);

const Multiband = () => (
  <Device title="Multiband Dynamics" width="w-[427px]">
    <SideStrip />
    <div className="w-[54px] flex flex-col items-center pt-[3px] pb-[3px]">
      <span className="h-[9px]">Split Freq</span>
      <div className="mt-1 grid grid-cols-[32px_11px] gap-x-[3px] gap-y-0.5">
        <button className="h-[9px] bg-[#e99d3e] text-[#3a260a]">High</button>
        <BandPower label="High" />
        <Field label="High crossover" value="2.50 kHz" className="h-[9px] bg-[linear-gradient(to_right,#2c626d_54%,#24272d_54%)]" />
        <button className="h-[9px] bg-[#24272d]">S</button>
      </div>
      <div className="mt-[11px] grid grid-cols-[32px_11px] gap-x-[3px] gap-y-0.5 items-center">
        <span className="row-span-2 text-center">Mid</span>
        <BandPower label="Mid" />
        <button className="h-[9px] bg-[#24272d]">S</button>
      </div>
      <div className="mt-[11px] grid grid-cols-[32px_11px] gap-x-[3px] gap-y-0.5">
        <button className="h-[9px] bg-[#e99d3e] text-[#3a260a]">Low</button>
        <BandPower label="Low" />
        <Field label="Low crossover" value="120 Hz" className="h-[9px] bg-[linear-gradient(to_right,#2c626d_20%,#24272d_20%)]" />
        <button className="h-[9px] bg-[#24272d]">S</button>
      </div>
      <button className="mt-auto w-[46px] h-[9px] bg-[#e99d3e] text-[#3a260a]">Soft Knee</button>
    </div>
    <div className="w-[30px] shrink-0 flex flex-col items-center pt-[3px] pb-[3px]">
      <span className="h-[9px]">Input</span>
      <div className="flex flex-col gap-px">
        <Dial label="High input" hideLabel text="0.00 dB" value={0.5} tick />
        <Dial label="Mid input" hideLabel text="0.00 dB" value={0.5} tick />
        <Dial label="Low input" hideLabel text="0.00 dB" value={0.5} tick />
      </div>
      <button className="mt-auto w-[27px] h-[9px] bg-[#e99d3e] text-[#3a260a]">RMS</button>
    </div>
    <div className="my-[3px] ml-px w-[256px] shrink-0 flex bg-[#1c1f21] whitespace-nowrap text-[#c4c4c4]">
      <div className="w-[34px] pl-[5px] pt-0.5 flex flex-col">
        <span className="h-3">Below</span>
        {bands.map((band) => (
          <div key={band.color} className={clsx('h-[31px] leading-[11px]', band.color)}>
            <div>-60.0 dB</div>
            <div>1 : 1.00</div>
          </div>
        ))}
      </div>
      <BandGraph />
      <div className="w-[35px] pl-0.5 pt-0.5 border-r border-[#26292b]">
        <div className="h-3">Above</div>
        {bands.map((band) => (
          <div key={band.color} className={clsx('h-[31px] leading-[11px]', band.color)}>
            <div className={clsx('relative', band.automated && 'text-[#c4c4c4]')}>
              {band.automated && <span className="absolute left-0 top-0 size-0.5 rounded-full bg-[#4fe08a]" />}
              {band.above}
            </div>
            <div>{band.ratio}</div>
          </div>
        ))}
      </div>
      <div className="flex-1 pl-[5px] pt-0.5">
        <div className="h-3">Att/Rel</div>
        {bands.map((band) => (
          <div key={band.color} className={clsx('h-[31px] leading-[11px]', band.color)}>
            <div>{band.att}</div>
            <div>{band.rel}</div>
          </div>
        ))}
      </div>
    </div>
    <div className="w-[35px] flex flex-col items-center pt-[3px] border-r border-[#36373a]">
      <span className="h-[9px]">Output</span>
      <div className="flex flex-col gap-px">
        <Dial label="High output" hideLabel text="0.00 dB" value={0.5} tick />
        <Dial label="Mid output" hideLabel text="0.00 dB" value={0.5} tick />
        <Dial label="Low output" hideLabel text="0.00 dB" value={0.5} tick />
      </div>
    </div>
    <div className="flex-1 flex flex-col items-center pt-[3px]">
      <Dial label="Output" text="0.00 dB" value={0.5} tick />
      <Dial label="Time" text="100 %" value={0.5} tick />
      <Dial label="Amount" text="100 %" value={1} blue />
    </div>
  </Device>
);

/* marks run clockwise from the lower left; a blank entry leaves its slot empty */
const markSpots: [number, number][] = [[7, 27], [8, 18], [13, 9], [22, 7], [31, 9], [38, 18], [37, 27]];

const StepKnob = ({ label, marks, pos, blue }: { label: string; marks: string[]; pos: number; blue?: boolean }) => {
  const angle = -115 + pos * 230;
  const [px, py] = polar(22, 17, 7, angle);
  return (
    <div className="flex flex-col items-center">
      <span className="h-2 leading-2">{label}</span>
      <span className="grid">
        <svg viewBox="0 0 44 30" className="col-start-1 row-start-1 w-11 h-[30px]" fill="none">
          <path d={arc(22, 17, 7.5, -120, 120)} stroke="#16181a" strokeWidth="1.500" />
          {blue && <path d={arc(22, 17, 7.5, -120, angle)} stroke="#5fb4d2" strokeWidth="1.500" />}
          <path d={`M22 17L${px} ${py}`} stroke="#16181a" strokeWidth="1.500" />
          {marks.map((mark, i) => {
            if (!mark) return null;
            const a = -120 + i * 40;
            const [ax, ay] = polar(22, 17, 9, a);
            const [bx, by] = polar(22, 17, 10.5, a);
            return (
              <g key={i}>
                <path d={`M${ax} ${ay}L${bx} ${by}`} stroke="#c4c4c4" strokeWidth="0.800" />
                <text x={markSpots[i][0]} y={markSpots[i][1]} textAnchor="middle" className="fill-[#d8d8d8] text-[7px]">{mark}</text>
              </g>
            );
          })}
        </svg>
        <input type="range" aria-label={label} min={0} max={1} step={0.01} defaultValue={pos} className="col-start-1 row-start-1 w-11 opacity-0" />
      </span>
    </div>
  );
};

const GlueCompressor = () => (
  <Device title="Glue Compressor" width="w-[208px]" brand="cytomic">
    <SideStrip />
    <div className="w-[49px] mr-px flex flex-col items-center pt-1">
      <StepKnob label="Attack" marks={['.01', '.1', '.3', '1', '3', '10', '30']} pos={0.8} blue />
      <StepKnob label="Release" marks={['.1', '.2', '.4', '.6', '.8', '1.2', 'A']} pos={1} blue />
      <StepKnob label="Ratio" marks={['2', '', '', '4', '', '', '10']} pos={0} />
    </div>
    <div className="my-[5px] w-[98px] shrink-0 flex flex-col bg-[#3a3b3e]">
      <svg viewBox="0 0 98 55" className="w-[98px] h-[55px] bg-[#1e2123]" fill="none">
        <g textAnchor="middle" className="fill-[#7c8082]">
          <text x="13" y="30">0</text>
          <text x="29" y="18">5</text>
          <text x="49" y="14">10</text>
          <text x="69" y="18">15</text>
          <text x="86" y="30">20</text>
        </g>
        <path d="M30 21l3 5M49 16v6M68 21l-3 5M83 32l-5 4" stroke="#7c8082" />
        <path d="M15 32l28 23" stroke="#5fb4c8" strokeWidth="1.800" />
      </svg>
      <div className="flex-1 flex justify-around pt-1.5 px-2">
        <Dial label="Threshold" text="0.00 dB" value={1} large ghost dot />
        <Dial label="Makeup" text="0.00 dB" value={0} large />
      </div>
    </div>
    <div className="flex-1 flex flex-col items-center pt-1">
      <span className="flex items-center gap-[3px] h-[10px]"><span className="size-1 rounded-full bg-[#26282d]" />Clip</span>
      <button className="w-[27px] h-[9px] bg-[#24272d]">Soft</button>
      <span className="mt-1.5 mb-[9px] w-[30px] h-px bg-[#303134]" />
      <Dial label="Range" text="70.0 dB" value={1} blue />
      <span className="h-2" />
      <Dial label="Dry/Wet" text="100 %" value={1} blue />
    </div>
  </Device>
);

const Utility = ({ bass, automated }: { bass: string; automated?: boolean }) => (
  <Device title="Utility" width="w-[99px]">
    <div className="w-[49px] flex flex-col items-center pt-1 pb-1 border-r border-[#36373a]">
      <span className="h-[9px]">Input</span>
      <div className="mt-0.5 flex gap-0.5">
        <button className="w-[19px] h-[9px] bg-[#24272d]">Ø L</button>
        <button className="w-[19px] h-[9px] bg-[#24272d]">Ø R</button>
      </div>
      <Select label="Channel mode" value="Stereo" pad="pl-px" className="mt-0.5 w-10 h-[9px] bg-[#24272d]" />
      <span className="h-1" />
      <Dial label="Width" text="100 %" value={0.5} tick ghost dot />
      <button className="mt-0.5 w-10 h-[9px] bg-[#24272d]">Mono</button>
      <button className="mt-auto w-10 h-[9px] bg-[#e99d3e] text-[#3a260a] whitespace-nowrap">Bass Mono</button>
      <div className="mt-0.5 flex gap-0.5">
        <Field
          label="Bass mono frequency"
          value={bass}
          className={clsx('w-7 h-[9px]', automated ? 'bg-[linear-gradient(to_right,#2c626d_38%,#24272d_38%)]' : 'bg-[#24272d]')}
        />
        <button aria-label="Bass listen" className="w-[10px] h-[9px] bg-[#24272d] flex items-center justify-center"><Headphones size={7} /></button>
      </div>
    </div>
    <div className="flex-1 flex flex-col items-center pt-1 pb-1">
      <span className="h-[9px]">Output</span>
      <span className="h-1.5" />
      <Dial label="Gain" text="0.00 dB" value={0.5} tick ghost={automated} dot={automated} />
      <span className="h-[5px]" />
      <Dial label="Balance" text="C" value={0.5} tick />
      <div className="mt-auto flex gap-0.5">
        <button className="w-[22px] h-[9px] bg-[#24272d]">Mute</button>
        <button className="w-[14px] h-[9px] bg-[#24272d]">DC</button>
      </div>
    </div>
  </Device>
);

const DeviceChain = () => (
  <div className="mt-1.5 h-[133px] flex gap-1.5 pl-0.5 leading-[9px] text-[#dedede]">
    <div className="flex border border-[#707376]">
      <MacroRack />
      <FoldedDevice />
      <EqEight freq="90.0 Hz" freqPos={0.25} first shapes={['cut', 'bell', 'bell', 'high', 'bell', 'bell', 'bell', 'lp']} active={0} />
      <Multiband />
      <GlueCompressor />
      <EqEight freq="11.3 kHz" freqPos={0.93} first={false} shapes={['low', 'high', 'bell', 'high', 'bell', 'bell', 'bell', 'lp']} active={1} />
      <Utility bass="110 Hz" />
      <Utility bass="120 Hz" automated />
      <div className="w-3 shrink-0 bg-[#424346]"><div className="h-3 bg-[#7d868c]" /></div>
    </div>
    <div className="flex-1 min-w-0 bg-[#3e3f42] overflow-hidden flex items-center pl-[13px]">
      <p className="w-[42px] shrink-0 text-center leading-[10px] whitespace-nowrap">Drop Audio<br />Effects Here</p>
    </div>
  </div>
);

const ChainPreview = () => (
  <svg viewBox="0 0 126 14" className="w-[126px] h-[14px]">
    <rect x="0.5" y="0.5" width="125" height="13" rx="2" fill="#141516" stroke="#6a6b6e" />
    <path d="M2 2h12v3H2z" fill="#c9a04a" />
    <path d="M2 2h3v3H2z" fill="#d9534a" />
    <path d="M2 8h3v2H2zM11 8h3v2h-3z" fill="#6fd65a" />
    <path d="M5 8h5v2H5z" fill="#e8e8e8" />
    <path d="M16 1h21v1H16zM38 1h10v1H38zM49 1h27v1H49zM78 1h38v1H78z" fill="#6d757a" />
    <path d="M20 3h15v7H20zM50 3h17v8H50zM89 3h20v7H89z" fill="#262b2d" />
    <path d="M17 3h1v8h-1zM38 3h2v2h-2zM38 7h2v2h-2zM41 3h1v8h-1zM45 3h2v2h-2zM45 7h2v2h-2zM70 3h2v2h-2zM70 7h2v2h-2zM83 3h3v3h-3zM83 8h3v2h-3zM78 3h1v7h-1zM110 3h1v8h-1zM113 4h2v2h-2zM113 8h2v2h-2zM118 4h2v2h-2zM118 8h2v2h-2zM122 3h1v8h-1z" fill="#5c5e61" />
    <path d="M36 3h1v2h-1zM43 5h1v2h-1zM111 4h1v2h-1zM116 8h1v2h-1z" fill="#b9823d" />
  </svg>
);

const StatusBar = () => (
  <footer className="mt-1.5 mb-[3px] h-[14px] flex items-center text-[#dedede]">
    <button aria-label="Info" className="ml-1 size-[10px] rounded-full bg-[#8a8b8d] text-[#232427] font-bold leading-none">i</button>
    <p className="ml-[11px] flex-1 h-full leading-[14px] pl-[5px] bg-[#3e3f42] rounded-sm">Insert Mark 31.1.1 (Time: 0:51:429)</p>
    <div className="ml-1.5 w-[155px] h-full flex bg-[#3e3f42] rounded-sm">
      <button aria-label="Preview" className="w-[13px] border-r border-[#2a2b2e] flex items-center justify-center">
        <svg viewBox="0 0 5 6" className="w-[5px] h-1.5 fill-current"><path d="M0 0l5 3-5 3z" /></svg>
      </button>
    </div>
    <button aria-label="Show device view" className="ml-1.5 w-[14px] h-full bg-[#e99d3e] rounded-sm flex items-center justify-center">
      <svg viewBox="0 0 6 5" className="w-1.5 h-[5px] fill-[#2b1c08]"><path d="M0 5h6L3 0z" /></svg>
    </button>
    <span className="w-[60px] text-center whitespace-nowrap">MUSIC GROUP</span>
    <ChainPreview />
    <button aria-label="Show mixer" className="ml-3 mr-0.5 flex items-center gap-1 text-[#8a8b8d]">
      <svg viewBox="0 0 10 10" className="size-[10px] fill-current"><path d="M0 4h1v6H0zM3 1h1v9H3zM6 3h1v7H6zM9 0h1v10H9z" /></svg>
      <Caret />
    </button>
  </footer>
);

const App = () => (
  <div className="min-h-screen flex flex-col overflow-hidden bg-[#262829] font-['Roboto',sans-serif] text-[8px] leading-[10px] font-bold">
    <TitleBar />
    <Transport />
    <div className="mt-1 mb-0.5 ml-[3px] h-[9px] relative bg-[#3e3f42]">
      <span className="absolute inset-y-0 left-[29.4%] w-px bg-[#d8d8d8]" />
    </div>
    <BeatRuler />
    <Arrangement />
    <TimeRuler />
    <DeviceChain />
    <StatusBar />
  </div>
);

export default App;
